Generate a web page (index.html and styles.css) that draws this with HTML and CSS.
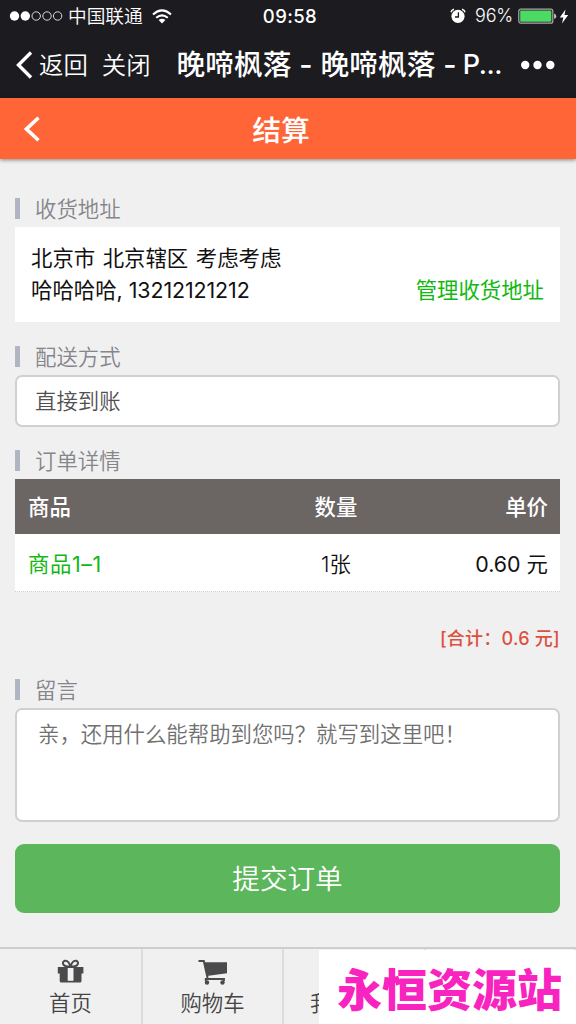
FILE: index.html
```html
<!DOCTYPE html>
<html lang="zh-CN">
<head>
<meta charset="utf-8">
<title>结算</title>
<link rel="stylesheet" href="styles.css">
</head>
<body>
<div class="screen">
  <header class="chrome">
    <div class="status">
      <div class="carrier">
        <svg class="signal" width="54" height="12" viewBox="0 0 54 12"><g fill="#fff"><circle cx="5.5" cy="6" r="4.7"/><circle cx="16.3" cy="6" r="4.7"/></g><g fill="none" stroke="#ddd" stroke-width="1"><circle cx="27.2" cy="6" r="4.2"/><circle cx="38" cy="6" r="4.2"/><circle cx="48.6" cy="6" r="4.2"/></g></svg>
        <span class="operator">中国联通</span>
        <svg class="wifi" width="20" height="15" viewBox="0 0 20 15"><g fill="none" stroke="#fff" stroke-width="2.1"><path d="M1 5.5Q10-2.6 19 5.5"/><path d="M4.2 8.8Q10 3.8 15.8 8.8"/></g><path d="M6.6 10.9Q10 8.4 13.4 10.9L10 14.5Z" fill="#fff"/></svg>
      </div>
      <span class="clock">09:58</span>
      <div class="power">
        <svg width="16" height="16" viewBox="0 0 16 16"><circle cx="8" cy="8.3" r="6.6" fill="#fff"/><path d="M1 4.2Q1.6 1.8 4 1.2M15 4.2Q14.4 1.8 12 1.2" fill="none" stroke="#fff" stroke-width="1.5"/><path d="M8.4 4.2V9H5" fill="none" stroke="#1c1b20" stroke-width="1.3"/></svg>
        <span class="percent">96%</span>
        <svg width="39" height="17" viewBox="0 0 39 17"><rect x=".8" y="1.2" width="34" height="14" rx="2" fill="none" stroke="#aaa" stroke-width="1.2"/><rect x="2.2" y="2.6" width="31.2" height="11.2" rx=".8" fill="#4cd964"/><path d="M36.2 5.5Q38.2 6 38.2 8.2Q38.2 10.5 36.2 11Z" fill="#ccc"/></svg>
        <svg class="bolt" width="10" height="15" viewBox="0 0 10 15"><path d="M6.5.5L.8 8.4H4.3L3 14.4L9.2 5.9H5.5Z" fill="#fff"/></svg>
      </div>
    </div>
    <div class="navbar">
      <svg class="nav-back" width="18" height="30" viewBox="0 0 18 30"><path d="M16 2.5L3.5 15L16 27.5" fill="none" stroke="#fff" stroke-width="3.4"/></svg>
      <span class="nav-link">返回</span>
      <span class="nav-link nav-close">关闭</span>
      <span class="nav-title"><span>晚啼枫落</span><span>-</span><span>晚啼枫落</span><span>-</span><span class="nav-cut">P...</span></span>
      <svg class="more" width="36" height="10" viewBox="0 0 36 10" fill="#fff"><circle cx="5.2" cy="5" r="4.2"/><circle cx="17.5" cy="5" r="4.2"/><circle cx="30.3" cy="5" r="4.2"/></svg>
    </div>
  </header>
  <div class="titlebar">
    <svg class="page-back" width="18" height="30" viewBox="0 0 18 30"><path d="M14.5 2.8L2.5 14L14.5 25.2" fill="none" stroke="#fff" stroke-width="3.6"/></svg>
    <h1 class="page-title">结算</h1>
  </div>
  <main class="content">
    <h2 class="label">收货地址</h2>
    <section class="address">
      <p class="region">北京市 北京辖区 考虑考虑</p>
      <p class="contact"><span>哈哈哈哈, <span class="phone">13212121212</span></span><a class="link">管理收货地址</a></p>
    </section>
    <h2 class="label label-ship">配送方式</h2>
    <div class="select">直接到账</div>
    <h2 class="label label-order">订单详情</h2>
    <div class="table">
      <div class="row head"><span>商品</span><span class="qty">数量</span><span class="price">单价</span></div>
      <div class="row"><span class="link item">商品1–1</span><span class="qty">1张</span><span class="price amount">0.60 元</span></div>
    </div>
    <p class="total">[合计：0.6 元]</p>
    <h2 class="label label-note">留言</h2>
    <div class="note">亲，还用什么能帮助到您吗？就写到这里吧！</div>
    <div class="submit">提交订单</div>
  </main>
  <nav class="tabs">
    <div class="tab">
      <svg width="28" height="24" viewBox="0 0 28 24"><g fill="none" stroke="#4a4a4c" stroke-width="2"><path d="M13.5 7.5Q8.5 8 6.7 6Q4.8 3 7.8 1.8Q11.5 1 13.5 7.5Q15.5 1 19.2 1.8Q22.2 3 20.3 6Q18.5 8 13.5 7.5Z"/></g><path fill="#4a4a4c" d="M.8 8H26.4V14.4H24.5V22Q24.5 23.6 22.9 23.6H4.3Q2.7 23.6 2.7 22V14.4H.8Z"/><path fill="#f0f0f0" d="M10.7 9H16.5V21.8H10.7Z"/></svg>
      <span>首页</span>
    </div>
    <div class="tab">
      <svg class="cart" width="30" height="26" viewBox="0 0 30 26"><path d="M.5 2H5.8L9.6 19" fill="none" stroke="#4a4a4c" stroke-width="2"/><path fill="#4a4a4c" d="M6.3 3.2H29V14.3L8.8 17Z"/><circle cx="9" cy="23.5" r="2.2" fill="#4a4a4c"/><circle cx="24.5" cy="23.5" r="2.2" fill="#4a4a4c"/><path d="M7.7 22V20H26V22" fill="none" stroke="#4a4a4c" stroke-width="1.8"/></svg>
      <span>购物车</span>
    </div>
    <div class="tab tab-mine"><span>我</span></div>
    <div class="tab"></div>
  </nav>
  <div class="stamp">永恒资源站</div>
</div>
</body>
</html>
```
FILE: styles.css
```css
* { box-sizing: border-box; }
body {
  margin: 0;
  font-family: Inter, "Noto Sans CJK SC", sans-serif;
  font-size: 21.4px;
  font-weight: 350;
  color: #111;
  background: #f0f0f0;
}
h1, h2, p { margin: 0; font-weight: 400; }
svg { display: block; flex: none; }
.screen {
  position: relative;
  width: 576px;
  height: 1024px;
  overflow: hidden;
  display: flex;
  flex-direction: column;
  white-space: nowrap;
}
.chrome { height: 98px; background: #1c1b20; color: #fff; flex: none; }
.status {
  height: 32px;
  display: grid;
  grid-template-columns: 1fr auto 1fr;
  align-items: center;
  padding: 0 7px 0 9px;
  line-height: 32px;
}
.carrier, .power { display: flex; align-items: center; }
.operator { font-size: 18.7px; margin: 0 9px 0 5px; padding-top: 1px; line-height: 31px; }
.clock { font-size: 18.5px; font-weight: 500; letter-spacing: .4px; padding-left: 2px; }
.power { justify-content: flex-end; }
.percent { font-size: 18px; margin: 0 5px 0 9px; letter-spacing: -.2px; }
.bolt { margin: 0 0 0 2px; }
.navbar {
  height: 66px;
  display: flex;
  align-items: center;
  padding: 0 20px 0 15px;
  line-height: 66px;
}
.nav-link { font-size: 24.4px; margin-left: 6px; }
.nav-close { margin-left: 14px; }
.nav-title {
  width: 326px;
  margin-left: 26px;
  display: flex;
  gap: 8px;
  font-size: 28.7px;
  font-weight: 500;
  line-height: 68px;
}
.nav-cut { font-size: 27px; letter-spacing: -.4px; margin-left: -2px; }
.more { margin-left: auto; }
.titlebar {
  position: relative;
  z-index: 1;
  height: 61px;
  flex: none;
  display: grid;
  grid-template-columns: 1fr auto 1fr;
  align-items: center;
  padding: 0 38px 0 24px;
  background: #ff6537;
  color: #fff;
  box-shadow: 0 1px 4px rgba(0, 0, 0, .45);
}
.page-title { font-size: 28.8px; line-height: 61px; font-weight: 500; padding-top: 2px; }
.content { flex: 1; padding: 39px 16px 0 15px; }
.label {
  height: 21px;
  line-height: 23px;
  font-size: 21.4px;
  font-weight: 350;
  color: #85858b;
  border-left: 5px solid #b0b5c3;
  padding-left: 15px;
}
.address {
  height: 95px;
  margin-top: 8px;
  padding: 15px 16px;
  background: #fff;
  line-height: 32px;
}
.region { word-spacing: 1.5px; }
.contact { display: flex; justify-content: space-between; }
.phone { letter-spacing: -.1px; }
.link { color: #12b812; }
.item { letter-spacing: .6px; font-weight: 400; }
.amount { font-weight: 400; }
.label-ship { margin-top: 24px; }
.select {
  height: 52px;
  margin-top: 8px;
  padding-left: 18px;
  border: 2px solid #d0d0d0;
  border-radius: 7px;
  background: #fff;
  color: #505050;
  line-height: 49px;
}
.label-order { margin-top: 23px; }
.table { margin-top: 8px; }
.row {
  display: grid;
  grid-template-columns: 218px 180px 1fr;
  height: 58px;
  line-height: 60px;
  padding: 0 12px 0 13px;
  background: #fff;
  border-bottom: 1px dotted #ccc;
}
.head {
  height: 55px;
  line-height: 57px;
  background: #6b6563;
  color: #fff;
  font-weight: 500;
  border: 0;
}
.qty { text-align: center; }
.price { text-align: right; }
.total {
  margin-top: 31px;
  height: 30px;
  line-height: 32px;
  text-align: right;
  font-size: 18px;
  letter-spacing: .25px;
  font-weight: 500;
  color: #dc5040;
}
.label-note { margin-top: 26px; }
.note {
  height: 114px;
  margin-top: 8px;
  padding: 8px 21px;
  border: 2px solid #d0d0d0;
  border-radius: 7px;
  background: #fff;
  color: #707070;
  line-height: 32px;
}
.submit {
  height: 69px;
  margin-top: 22px;
  border-radius: 9px;
  background: #5cb65c;
  color: #fff;
  font-size: 27.6px;
  line-height: 71px;
  text-align: center;
}
.tabs {
  height: 77px;
  flex: none;
  display: grid;
  grid-template-columns: 143px 141px 142px 1fr;
  border-top: 2px solid #cecece;
  color: #444;
}
.tab {
  display: flex;
  flex-direction: column;
  align-items: center;
  border-right: 2px solid #dcdcdc;
  padding-top: 10px;
  gap: 5px;
  line-height: 30px;
}
.cart { margin-bottom: -2px; }
.tab-mine { align-items: flex-start; padding: 39px 0 0 26px; }
.stamp {
  position: absolute;
  right: 0;
  bottom: 0;
  width: 257px;
  height: 74px;
  padding-left: 18px;
  background: #fff;
  color: #f923c0;
  font: 900 45px/76px "Noto Sans CJK SC", sans-serif;
}
```
